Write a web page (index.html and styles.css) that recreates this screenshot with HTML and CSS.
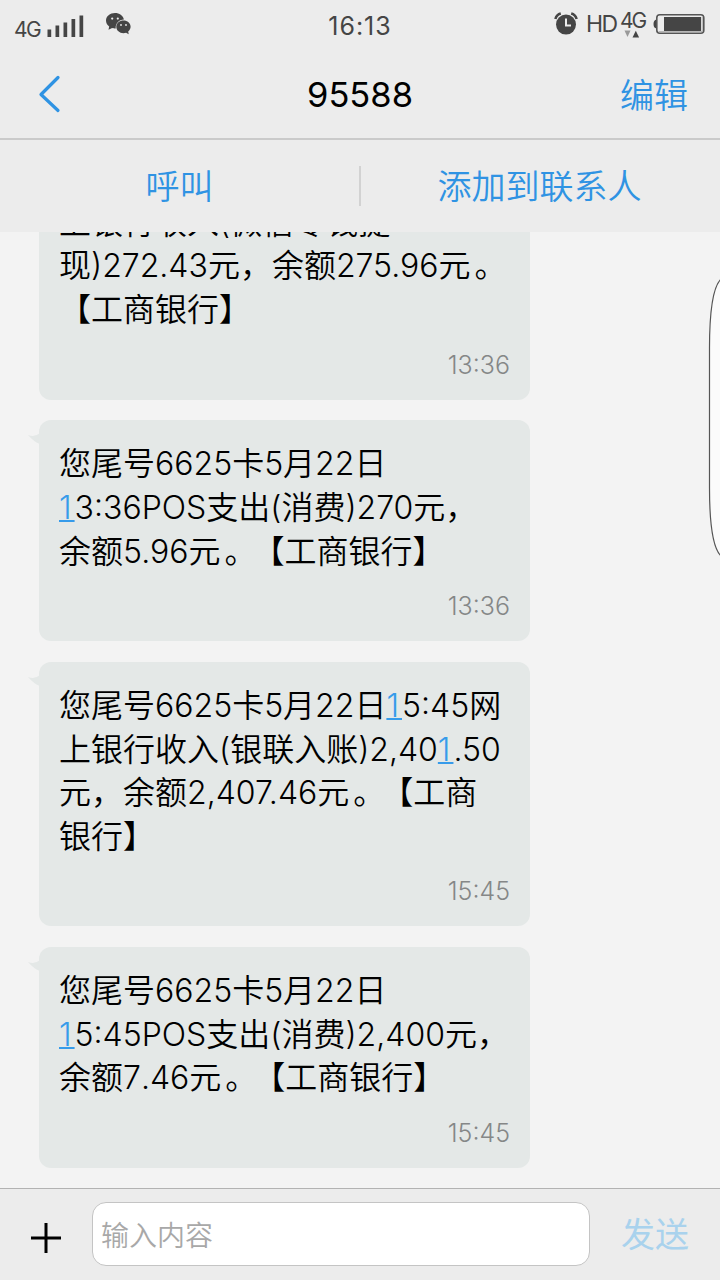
FILE: index.html
```html
<!DOCTYPE html>
<html lang="zh-CN">
<head>
<meta charset="utf-8">
<title>95588</title>
<link rel="stylesheet" href="styles.css">
</head>
<body>
<div class="screen">
  <header class="status">
    <div class="status-left">
      <span class="net">4G</span>
      <svg class="signal" width="38" height="24" viewBox="0 0 38 24" fill="#454545"><path d="M.5 15.500h3.700v7.500h-3.700zM8.500 11.500h3.700v11.500h-3.700zM16.500 8.500h3.700v14.500h-3.700zM24.500 5h3.700v18h-3.700zM32.500 1.500h3.700v21.500h-3.700z"/></svg>
      <svg class="wechat" width="26" height="22" viewBox="0 0 26 22"><path fill="#454545" d="M9 0C4 0 0 3.200 0 7.500c0 2.600 1.300 4.500 3.200 5.900l-.7 3.300 3.600-1.700c1.200.3 2 .4 3.600.4C9.300 10.500 13 6.500 17.900 6.400 17 2.600 13.400 0 9 0z"/><path fill="#454545" d="M24.600 13.800c0-3.700-3.200-6.400-7.100-6.400-4 0-7.200 2.700-7.200 6.400s3.200 6.400 7.200 6.400c.9 0 1.800-.2 2.600-.5l2.600 1.500-.5-2.700c1.500-1.200 2.400-2.800 2.400-4.700z"/><g fill="#ececec"><circle cx="6.200" cy="5.600" r="1.100"/><circle cx="11.800" cy="5.600" r="1.100"/><circle cx="15" cy="12" r=".9"/><circle cx="20" cy="12" r=".9"/></g></svg>
    </div>
    <div class="clock">16:13</div>
    <div class="status-right">
      <svg class="alarm" width="24" height="24" viewBox="0 0 24 24"><circle cx="12" cy="12.600" r="10" fill="#454545"/><path d="M1.400 7C2.200 4.200 4 2.300 6.800 1.600M22.600 7C21.800 4.200 20 2.300 17.200 1.600" fill="none" stroke="#454545" stroke-width="2.600"/><path d="M12 6.400v7.200h5" fill="none" stroke="#ececec" stroke-width="2"/></svg>
      <span class="hd">HD</span>
      <div class="data">
        <span class="data-label">4G</span>
        <svg width="16" height="8" viewBox="0 0 16 8"><path d="M.5.5h6L3.500 7z" fill="#999"/><path d="M8.500 7.500h6.600L11.800.8z" fill="#454545"/></svg>
      </div>
      <svg class="battery" width="52" height="22" viewBox="0 0 52 22"><path d="M3.500 6.500Q.5 7 .5 11t3 4.500z" fill="#454545"/><rect x="3.800" y="1.800" width="47" height="18.500" rx="3" fill="#ececec" stroke="#555" stroke-width="1.600"/><path d="M11 4h37v14h-37z" fill="#454545"/><path d="M5.500 18.700h43.700V4" fill="none" stroke="#aaa"/></svg>
    </div>
  </header>
  <nav class="titlebar">
    <svg class="back" width="24" height="40" viewBox="0 0 24 40"><path d="M20 3.500 3 20.500l17 16" fill="none" stroke="#2f93e3" stroke-width="3.200" stroke-linecap="round" stroke-linejoin="round"/></svg>
    <h1 class="title">95588</h1>
    <span class="edit">编辑</span>
  </nav>
  <div class="actions">
    <span class="action">呼叫</span>
    <span class="action">添加到联系人</span>
  </div>
  <main class="thread">
    <section class="bubble">
      <p class="text"><span class="line">上银行收入(微信零钱提</span><span class="line">现)272.43元，余额275.96元<span class="stop">。</span></span><span class="line">【工商银行】</span></p>
      <time class="time">13:36</time>
    </section>
    <section class="bubble">
      <svg class="tail" width="12" height="12" viewBox="0 0 12 12"><path d="M0 2Q7 4.500 12 0v11Q6 9 0 2z" fill="#e4e8e7"/></svg>
      <p class="text"><span class="line">您尾号6625卡5月22日</span><span class="line"><a class="link">1</a>3:36POS支出(消费)270元，</span><span class="line">余额5.96元<span class="stop">。</span>【工商银行】</span></p>
      <time class="time">13:36</time>
    </section>
    <section class="bubble">
      <svg class="tail" width="12" height="12" viewBox="0 0 12 12"><path d="M0 2Q7 4.500 12 0v11Q6 9 0 2z" fill="#e4e8e7"/></svg>
      <p class="text"><span class="line">您尾号6625卡5月22日<a class="link">1</a>5:45网</span><span class="line">上银行收入(银联入账)2,40<a class="link">1</a>.50</span><span class="line">元，余额2,407.46元<span class="stop">。</span>【工商</span><span class="line">银行】</span></p>
      <time class="time">15:45</time>
    </section>
    <section class="bubble">
      <svg class="tail" width="12" height="12" viewBox="0 0 12 12"><path d="M0 2Q7 4.500 12 0v11Q6 9 0 2z" fill="#e4e8e7"/></svg>
      <p class="text"><span class="line">您尾号6625卡5月22日</span><span class="line"><a class="link">1</a>5:45POS支出(消费)2,400元，</span><span class="line unkerned">余额7.46元<span class="stop">。</span>【工商银行】</span></p>
      <time class="time">15:45</time>
    </section>
    <svg class="edge" width="12" height="280" viewBox="0 0 12 280"><path d="M13 1Q1.500 12 1.500 70V210Q1.500 267 13 278z" fill="#fbfbfb" stroke="#555" stroke-width="1.200"/></svg>
  </main>
  <footer class="composer">
    <svg class="plus" width="30" height="30" viewBox="0 0 30 30"><path d="M15 0v30M0 15h30" stroke="#000" stroke-width="3"/></svg>
    <div class="input">输入内容</div>
    <span class="send">发送</span>
  </footer>
</div>
</body>
</html>
```
FILE: styles.css
```css
* { box-sizing: border-box; }
body {
  margin: 0;
  font-family: Inter, "Noto Sans CJK SC", sans-serif;
  font-weight: 350;
  text-spacing-trim: space-all;
  color: #000;
}
.screen {
  width: 720px;
  height: 1280px;
  display: flex;
  flex-direction: column;
  overflow: hidden;
  background: #f3f3f3;
}
.status {
  height: 49px;
  display: grid;
  grid-template-columns: 1fr auto 1fr;
  background: #ececec;
  color: #454545;
}
.status-left, .status-right { display: flex; align-items: flex-start; }
.status-left { padding-left: 14px; }
.status-right { justify-content: flex-end; padding-right: 15px; }
.net { width: 33px; margin-top: 17px; font-size: 21px; line-height: 25px; font-weight: 400; letter-spacing: -1.5px; }
.signal { margin-top: 14px; }
.wechat { margin: 13px 0 0 21px; }
.clock { margin-top: 11px; font-size: 25px; line-height: 30px; font-weight: 400; letter-spacing: 1px; }
.alarm { margin: 12px 1px 0 0; }
.hd { width: 34px; margin: 9px 0 0 7px; font-size: 23px; line-height: 30px; font-weight: 400; letter-spacing: -1.500px; }
.data { width: 33px; display: flex; flex-direction: column; padding-top: 11px; }
.data-label { font-size: 21px; line-height: 19px; font-weight: 400; letter-spacing: -2px; }
.data svg { margin-left: 4px; }
.battery { margin-top: 13px; }
.titlebar {
  height: 91px;
  display: grid;
  grid-template-columns: 1fr auto 1fr;
  align-items: center;
  padding: 0 32px 0 38px;
  border-bottom: 2px solid #cacaca;
  background: #ececec;
}
.title { margin: 2px 0 0 -6px; font-size: 34.500px; line-height: 44px; font-weight: 400; }
.edit { justify-self: end; margin-top: 5px; font-size: 34px; line-height: 44px; color: #2f93e3; }
.actions { height: 92px; display: grid; grid-template-columns: 359px 1fr; align-items: center; background: #ececec; color: #2f93e3; font-size: 34px; }
.action { height: 40px; line-height: 41px; text-align: center; }
.action + .action { border-left: 2px solid #d2d2d2; padding-right: 2px; }
.thread {
  position: relative;
  height: 956px;
  display: flex;
  flex-direction: column;
  justify-content: flex-end;
  gap: 20.8px;
  padding: 0 0 20px 39px;
  overflow: hidden;
}
.bubble {
  position: relative;
  flex: none;
  width: 491px;
  padding: 22px 20px 19px 20px;
  border-radius: 12px;
  background: #e4e8e7;
}
.bubble:first-of-type { padding-top: 60px; }
.tail { position: absolute; left: -11px; top: 13px; }
.text { margin: 0; font-size: 32px; line-height: 43.600px; }
.line { display: block; white-space: nowrap; height: 43.600px; }
.unkerned { font-kerning: none; }
.stop { display: inline-block; width: 32px; height: 43.600px; text-indent: 4px; vertical-align: top; }
.link {
  color: #369bea;
  letter-spacing: 3px;
  text-decoration: underline;
  text-decoration-thickness: 1.500px;
  text-decoration-skip-ink: none;
}
.time { display: block; margin-top: 19px; height: 30px; text-align: right; font-size: 25px; line-height: 29px; color: #858787; }
.edge { position: absolute; right: 0; top: 46px; }
.composer {
  height: 92px;
  display: flex;
  align-items: center;
  padding-left: 31px;
  border-top: 1px solid #b2b2b2;
  background: #ececec;
}
.plus { margin-top: 6px; }
.input {
  width: 498px;
  height: 64px;
  margin: -2px 0 0 31px;
  padding-left: 8px;
  border: 1px solid #c4c4c4;
  border-radius: 14px;
  background: #fff;
  color: #a8a8a8;
  font-size: 28px;
  line-height: 67px;
}
.send { margin: 1px 0 0 31px; font-size: 34px; line-height: 44px; color: #a9d2ed; font-weight: 400; }
```
